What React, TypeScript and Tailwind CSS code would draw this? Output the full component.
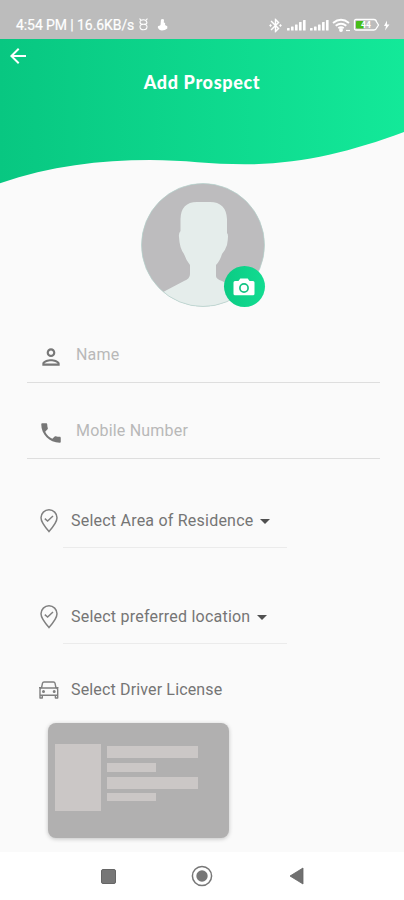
import type { ReactNode } from "react";
import { MdArrowBack, MdBluetoothConnected, MdOutlinePerson, MdPhone, MdArrowDropDown } from "react-icons/md";

function Signal() {
  return (
    <svg width="19" height="12" viewBox="0 0 19 12" fill="#fff">
      <rect x="0" y="9" width="2.6" height="2.5" rx=".5" />
      <rect x="4" y="7.5" width="2.6" height="4" rx=".5" />
      <rect x="8" y="5.5" width="2.6" height="6" rx=".5" />
      <rect x="12" y="3" width="2.6" height="8.5" rx=".5" />
      <rect x="16" y="1" width="2.6" height="10.5" rx=".5" />
    </svg>
  );
}

function StatusBar() {
  return (
    <div className="flex h-[39px] items-end bg-[#bcbcbc] pb-[6px] pl-4 pr-[14px] text-white">
      <span className="w-[119px] whitespace-nowrap text-[14px] leading-[15px] tracking-[-0.08px] [-webkit-text-stroke:0.2px_#fff]">
        4:54 PM | 16.6KB/s
      </span>
      <svg className="mb-[2px] ml-[3px]" width="11" height="13" viewBox="0 0 11 13" fill="none" stroke="#fff" strokeWidth="1.1">
        <path d="M1.500.700 3 2.200M9.500.700 8 2.200M9 4.500Q8 1.800 5.500 1.800Q2 1.800 2 4.200Q2 6.300 5.500 6.300Q9 6.300 9 8.800Q9 11.800 5.500 11.800Q2 11.800 2 8.800Q2 6.300 5.500 6.300Q9 6.300 9 4.500" />
      </svg>
      <svg className="mb-[1px] ml-[8px]" width="11" height="14" viewBox="0 0 11 14" fill="#fff">
        <path d="M4 1.500Q6 .3 7 1.700L6.800 4.500Q8.800 4.500 8 7L10.300 8.200V10.500Q8 12.500 5 12.500T.800 9.500Q.500 7.500 2.500 7.800L3.500 7Z" />
      </svg>
      <div className="ml-auto flex h-[16px] items-center">
        <MdBluetoothConnected size={17} color="#fff" />
        <span className="ml-[3px]"><Signal /></span>
        <span className="ml-[4px]"><Signal /></span>
        <svg className="ml-[3px]" width="19" height="15" viewBox="0 0 19 15" fill="none" stroke="#fff" strokeWidth="1.900">
          <path d="M1 5Q9 -1.500 17 5M3.700 7.800Q9 3.500 14.300 7.800M6.300 10.300Q9 8 11.700 10.300" />
          <circle cx="9" cy="12" r="1" fill="#fff" />
          <path d="M14 12.500h4" strokeWidth="1.200" />
        </svg>
        <svg className="ml-[2px]" width="27" height="14" viewBox="0 0 27 14">
          <path d="M3 1.500H21Q23 1.500 23.500 3.800L25.500 7 23.500 10.200Q23 12 21 12H3Q1.500 12 1.500 10.500V3Q1.500 1.500 3 1.500Z" fill="none" stroke="#fff" strokeWidth="1.300" />
          <rect x="3" y="3" width="8" height="7.500" rx="1" fill="#46bd18" />
          <text x="8" y="10" fill="#fff" fontSize="8.500" fontWeight="700" fontFamily="Roboto, sans-serif">44</text>
        </svg>
        <svg className="ml-[3px]" width="7" height="11" viewBox="0 0 7 11"><path d="M4 .5 1 6H3L2 10.500 6.500 4.500H4Z" fill="#fff" /></svg>
      </div>
    </div>
  );
}

function Header() {
  return (
    <header className="grid h-[144px]">
      <svg className="col-start-1 row-start-1" width="404" height="145" viewBox="0 39 404 145">
        <defs>
          <linearGradient id="wave" x1="0" x2="1" y1="0" y2="0">
            <stop offset="0" stopColor="#08c781" />
            <stop offset="1" stopColor="#13e999" />
          </linearGradient>
        </defs>
        <path d="M0 39H404V132C350 152 300 164.300 245 164.300C210 164.300 185 160 150 160C100 160 50 166 0 183.300Z" fill="url(#wave)" />
      </svg>
      <div className="col-start-1 row-start-1">
        <div className="flex h-[30px] items-center pl-[6px] pt-[4px]">
          <MdArrowBack size={24} color="#fff" />
        </div>
        <h1 className="text-center font-[Lato,sans-serif] text-[18px] font-black leading-[26px] tracking-[0.65px] text-white">Add Prospect</h1>
      </div>
    </header>
  );
}

function CameraIcon() {
  return (
    <svg width="22" height="18" viewBox="0 0 22 18">
      <path d="M2 3H5.500L7.300.500H14.700L16.500 3H20Q21.500 3 21.500 4.500V15.800Q21.500 17.300 20 17.300H2Q.500 17.300.500 15.800V4.500Q.500 3 2 3Z" fill="#fff" />
      <circle cx="11" cy="10" r="4.100" fill="none" stroke="#12c483" strokeWidth="1.700" />
    </svg>
  );
}

function Avatar() {
  return (
    <div className="relative ml-[140.500px] h-[124px] w-[124px]">
      <svg width="124" height="124" viewBox="0 0 124 124">
        <clipPath id="round"><circle cx="62" cy="62" r="61.500" /></clipPath>
        <g clipPath="url(#round)">
          <rect width="124" height="124" fill="#bdbcbe" />
          <path d="M39.500 48V36Q40 19 56 19H69Q85 19 86 36V50Q88 51 86 62Q84 68 81 71Q79 78 75 82V93Q75 96 81 98L104 110V124H18V112L24 108 43 98Q49 96 49 91V82Q45 77 43 71Q38.500 65 38 54Q37.500 50 39.500 48Z" fill="#e5edeb" />
        </g>
        <circle cx="62" cy="62" r="61.500" fill="none" stroke="#b2d0ca" strokeWidth=".7" />
      </svg>
      <div className="absolute bottom-0 right-0 flex h-[41px] w-[41px] items-center justify-center rounded-full bg-linear-to-r from-[#0bcb84] to-[#12dc91]">
        <CameraIcon />
      </div>
    </div>
  );
}

function Field({ icon, label }: { icon: ReactNode; label: string }) {
  return (
    <div className="mb-[19px] ml-[27px] mr-6 flex h-[57px] items-start border-b border-[#dedede] pl-[11px] pt-[19px]">
      <span className="-mt-[1px] w-[38px]">{icon}</span>
      <span className="text-[16px] leading-[20px] tracking-[0.2px] text-[#b8b8b8]">{label}</span>
    </div>
  );
}

function PinCheck() {
  return (
    <svg width="20" height="24" viewBox="0 0 20 24" fill="none" stroke="#808080" strokeWidth="1.500">
      <path d="M10 22.500Q2 13.500 2 8.800A8 8 0 0 1 18 8.800Q18 13.500 10 22.500Z" />
      <path d="M5.800 9.700 8.600 12 14 7" />
    </svg>
  );
}

function Picker({ label }: { label: string }) {
  return (
    <div className="flex h-[50px] pl-[39px]">
      <span className="mt-[11px] w-[24px]"><PinCheck /></span>
      <div className="flex h-[50px] w-[224px] items-start border-b border-[#ebebeb] pl-[8px] pt-[13px]">
        <span className="whitespace-nowrap text-[16px] leading-[20px] tracking-[0.22px] text-[#757575]">{label}</span>
        <MdArrowDropDown className="-mt-[2px]" size={24} color="#505050" />
      </div>
    </div>
  );
}

function LicenseCard() {
  return (
    <div className="ml-[48px] mt-[23px] flex h-[115px] w-[181px] rounded-[8px] bg-[#b1b0b0] pl-[7px] pt-[21px] shadow-[0_1px_4px_rgba(0,0,0,0.22)]">
      <div className="h-[67px] w-[46px] bg-[#cbc7c6]" />
      <div className="ml-[6px] flex flex-col pt-[2px]">
        <div className="h-[12px] w-[91px] bg-[#cbc7c6]" />
        <div className="mt-[5px] h-[9px] w-[49px] bg-[#cbc7c6]" />
        <div className="mt-[5px] h-[12px] w-[91px] bg-[#cbc7c6]" />
        <div className="mt-[4px] h-[8px] w-[49px] bg-[#cbc7c6]" />
      </div>
    </div>
  );
}

function CarIcon() {
  return (
    <svg width="22" height="20" viewBox="0 0 22 20" fill="none" stroke="#808080" strokeWidth="1.400" strokeLinejoin="round">
      <path d="M3.500 8 4.500 3.200Q4.800 2 6 2H15.500Q16.700 2 17 3.200L18 8M1 7.700H3.500M18 7.700H20.500M3.500 8H18Q19.700 8 19.700 10V15.200H2V10Q2 8 3.500 8ZM2 15V18H4.300V15.200M17.400 15.200V18H19.700V15" />
      <circle cx="5.500" cy="11.600" r=".8" fill="#808080" />
      <circle cx="16.200" cy="11.600" r=".8" fill="#808080" />
    </svg>
  );
}

export default function App() {
  return (
    <div className="flex h-[900px] w-[404px] flex-col overflow-hidden bg-[#fafafa] font-[Roboto,sans-serif]">
      <StatusBar />
      <Header />
      <main className="h-[669px]">
        <Avatar />
        <div className="pt-[19px]">
          <Field icon={<MdOutlinePerson size={26} color="#777" />} label="Name" />
          <Field icon={<MdPhone size={26} color="#777" />} label="Mobile Number" />
        </div>
        <div className="mt-[39px] flex flex-col gap-[46px]">
          <Picker label="Select Area of Residence" />
          <Picker label="Select preferred location" />
        </div>
        <div className="mt-[36px] flex h-[20px] items-center pl-[38px]">
          <CarIcon />
          <span className="ml-[11px] text-[16px] leading-[20px] tracking-[0.15px] text-[#757575]">Select Driver License</span>
        </div>
        <LicenseCard />
      </main>
      <nav className="flex h-[48px] items-center bg-white pl-[101px]">
        <div className="h-[15px] w-[15px] rounded-[2px] border border-[#666] bg-[#777]" />
        <svg className="ml-[75px]" width="22" height="22" viewBox="0 0 22 22">
          <circle cx="11" cy="11" r="9.600" fill="none" stroke="#777" strokeWidth="1.500" />
          <circle cx="11" cy="11" r="5.700" fill="#777" />
        </svg>
        <svg className="ml-[76px]" width="15" height="18" viewBox="0 0 15 18"><path d="M1 9 14 1V17Z" fill="#707070" stroke="#666" strokeWidth=".8" /></svg>
      </nav>
    </div>
  );
}
